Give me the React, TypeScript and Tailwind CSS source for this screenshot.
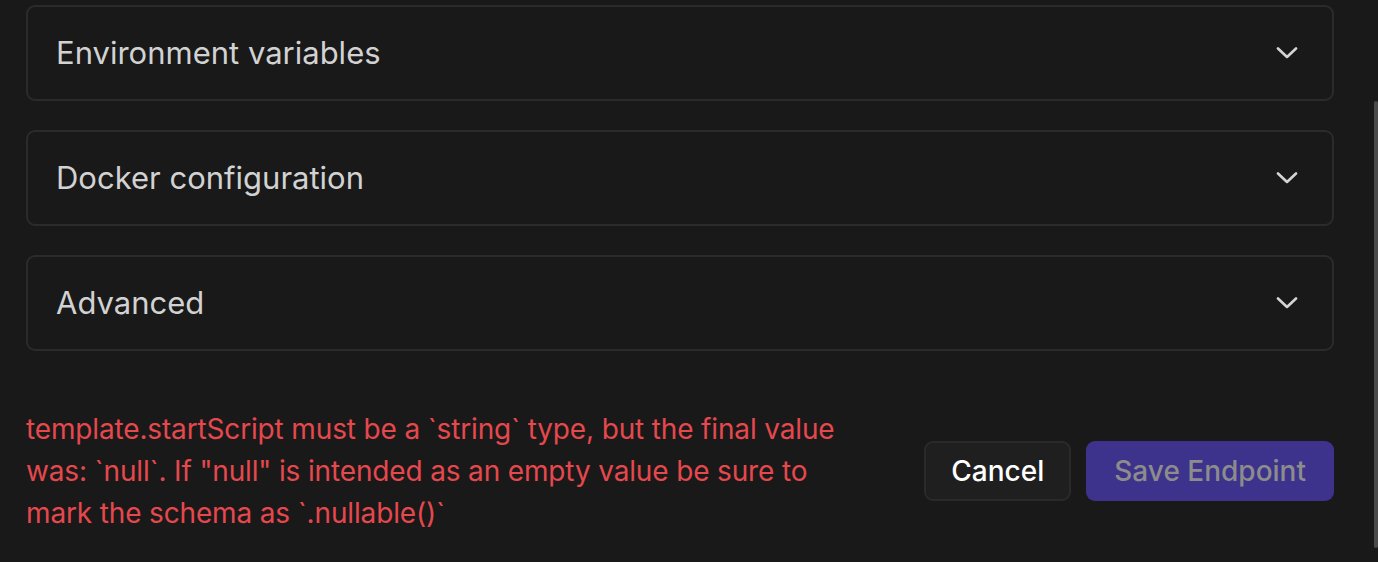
const sections = ["Environment variables", "Docker configuration", "Advanced"];

const Chevron = () => (
  <svg width={22} height={12} viewBox="0 0 22 12" fill="none">
    <path
      d="M2 1.5 L11 10 L20 1.5"
      stroke="#d4d4d4"
      strokeWidth={2.6}
      strokeLinecap="round"
      strokeLinejoin="round"
    />
  </svg>
);

interface SectionProps {
  title: string;
}

const CollapsedSection = ({ title }: SectionProps) => {
  return (
    <div className="h-[96px] rounded-[9px] border-2 border-[#2b2b2b] flex items-center justify-between pl-[28px] pr-[34px] cursor-pointer">
      <span className="text-[31px] leading-[42px] text-[#d2d2d2]">{title}</span>
      <Chevron />
    </div>
  );
};

const App = () => {
  return (
    <div
      className="w-[1378px] h-[562px] bg-[#191919] flex overflow-hidden"
      style={{ fontFamily: "Inter, 'Liberation Sans', sans-serif" }}
    >
      <div className="flex-1 pl-[26px] pr-[40px] pt-[5px]">
        <div className="flex flex-col gap-[29px]">
          {sections.map((s) => (
            <CollapsedSection key={s} title={s} />
          ))}
        </div>

        <div className="flex items-center mt-[57px]">
          <p className="w-[840px] text-[28px] leading-[42px] tracking-[-0.15px] text-[#e5484d]">
            template.startScript must be a `string` type, but the final value
            was: `null`. If "null" is intended as an empty value be sure to
            mark the schema as `.nullable()`
          </p>
          <div className="ml-auto flex gap-[15px]">
            <button className="h-[60px] px-[25px] rounded-[9px] border-2 border-[#2a2a2a] bg-[#1f1f1f] text-white text-[28px] font-medium">
              Cancel
            </button>
            <button
              disabled
              className="h-[60px] px-[28px] rounded-[9px] bg-[#3d338c] text-[#8c8c8c] text-[28px] font-medium"
            >
              Save Endpoint
            </button>
          </div>
        </div>
      </div>

      <div className="w-[4px] pt-[101px] pb-[14px] flex">
        <div className="w-full rounded-full bg-[#4a4a4a]" />
      </div>
    </div>
  );
};

export default App;
